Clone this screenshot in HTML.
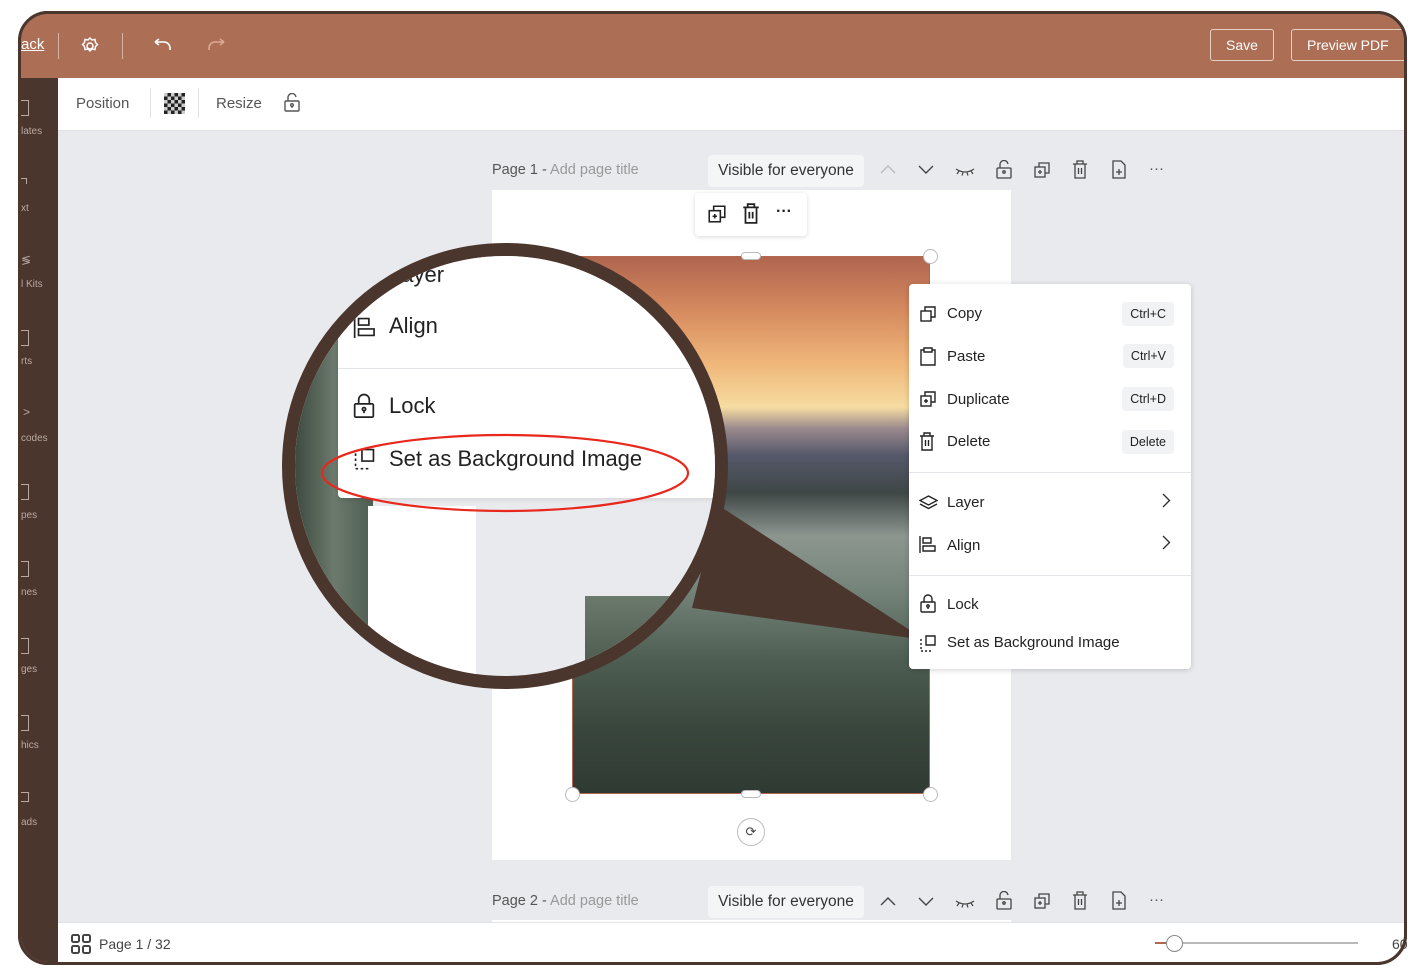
<!DOCTYPE html>
<html><head><meta charset="utf-8"><style>
*{box-sizing:border-box;margin:0;padding:0}
body{width:1425px;height:975px;background:#fff;position:relative;overflow:hidden;font-family:"Liberation Sans",sans-serif}
.frame{position:absolute;left:18px;top:11px;width:1389px;height:954px;border:3px solid #4b362e;border-radius:30px;overflow:hidden;background:#e9eaee}
.top{position:absolute;left:0;top:0;width:100%;height:64px;background:#ad6e56}
.side{position:absolute;left:0;top:64px;width:37px;bottom:0;background:#4b362e}
.tool{position:absolute;left:37px;top:64px;right:0;height:53px;background:#fff;border-bottom:1px solid #dfe0e4}
.abs{position:absolute}
.sl{position:absolute;left:0;width:37px;font-size:10px;color:#b8aaa3}
.btn{position:absolute;border:1px solid #e8cfc4;border-radius:3px;color:#fff;font-size:14px;text-align:center;line-height:30px;height:32px}
.menu{position:absolute;left:909px;top:284px;width:282px;height:385px;background:#fff;border-radius:4px;box-shadow:0 1px 6px rgba(0,0,0,.18);font-size:15px;color:#222}
.mi{position:absolute;left:38px}
.kb{position:absolute;right:17px;background:#f1f2f4;border-radius:4px;font-size:12.5px;padding:0 8px;height:24px;line-height:24px}
.ic{position:absolute;left:10px}
.hdr{position:absolute;font-size:14.5px;color:#555}
</style></head><body>
<div class="frame">
 <div class="top">
  <div class="abs" style="left:0;top:22px;color:#fff;font-size:15px;text-decoration:underline">ack</div>
  <div class="abs" style="left:37px;top:19px;width:1px;height:26px;background:#d9b2a2"></div>
  <svg class="abs" style="left:59px;top:22px" width="20" height="20" viewBox="0 0 20 20" fill="none" stroke="#fff" stroke-width="1.5"><circle cx="10" cy="10" r="3"/><path d="M10 2l2 2 3-.5.5 3 2 2-2 2-.5 3-3-.5-2 2-2-2-3 .5-.5-3-2-2 2-2 .5-3 3 .5z"/></svg>
  <div class="abs" style="left:101px;top:19px;width:1px;height:26px;background:#d9b2a2"></div>
  <svg class="abs" style="left:130px;top:24px" width="22" height="16" viewBox="0 0 22 16" fill="none" stroke="#fff" stroke-width="1.6"><path d="M4 4h9a6 6 0 016 6v2M4 4l4-3M4 4l4 3"/></svg>
  <svg class="abs" style="left:185px;top:24px" width="22" height="16" viewBox="0 0 22 16" fill="none" stroke="#d9a993" stroke-width="1.6"><path d="M3 12v-2a6 6 0 016-6h9M18 4l-4-3M18 4l-4 3"/></svg>
  <div class="btn" style="left:1189px;top:15px;width:64px">Save</div>
  <div class="btn" style="left:1270px;top:15px;width:120px;text-align:left;padding-left:15px">Preview PDF</div>
 </div>
 <div class="side">
  <div class="sl" style="top:48px">lates</div>
  <div class="sl" style="top:125px">xt</div>
  <div class="sl" style="top:201px">l Kits</div>
  <div class="sl" style="top:278px">rts</div>
  <div class="sl" style="top:355px">codes</div>
  <div class="sl" style="top:432px">pes</div>
  <div class="sl" style="top:509px">nes</div>
  <div class="sl" style="top:586px">ges</div>
  <div class="sl" style="top:662px">hics</div>
  <div class="sl" style="top:739px">ads</div>
  <div class="abs" style="left:0;top:22px;width:8px;height:16px;border:1.5px solid #b8aaa3;border-left:none"></div>
  <div class="abs" style="left:0;top:100px;width:6px;height:6px;border-top:1.5px solid #b8aaa3;border-right:1.5px solid #b8aaa3"></div>
  <div class="abs" style="left:0;top:175px;color:#b8aaa3;font-size:12px">≶</div>
  <div class="abs" style="left:0;top:252px;width:8px;height:16px;border:1.5px solid #b8aaa3;border-left:none"></div>
  <div class="abs" style="left:2px;top:327px;color:#b8aaa3;font-size:12px">&gt;</div>
  <div class="abs" style="left:0;top:406px;width:8px;height:16px;border:1.5px solid #b8aaa3;border-left:none"></div>
  <div class="abs" style="left:0;top:483px;width:8px;height:16px;border:1.5px solid #b8aaa3;border-left:none"></div>
  <div class="abs" style="left:0;top:560px;width:8px;height:16px;border:1.5px solid #b8aaa3;border-left:none"></div>
  <div class="abs" style="left:0;top:637px;width:8px;height:16px;border:1.5px solid #b8aaa3;border-left:none"></div>
  <div class="abs" style="left:0;top:714px;width:8px;height:10px;border:1.5px solid #b8aaa3;border-left:none"></div>
 </div>
 <div class="tool">
  <div class="abs" style="left:18px;top:17px;font-size:15px;color:#555">Position</div>
  <div class="abs" style="left:92px;top:10px;width:1px;height:30px;background:#e2e2e2"></div>
  <div class="abs" style="left:106px;top:15px;width:21px;height:21px;background:repeating-conic-gradient(#222 0 25%,#ccc 0 50%) 0 0/7px 7px"></div>
  <div class="abs" style="left:140px;top:10px;width:1px;height:30px;background:#e2e2e2"></div>
  <div class="abs" style="left:158px;top:17px;font-size:15px;color:#555">Resize</div>
  <svg class="abs" style="left:225px;top:15px" width="18" height="20" viewBox="0 0 18 20" fill="none" stroke="#555" stroke-width="1.4"><rect x="2" y="8" width="14" height="10" rx="1"/><path d="M5 8V5a4 4 0 018-1"/><circle cx="9" cy="12" r="1.3"/><path d="M9 13v2"/></svg>
 </div>
</div>
<!-- page 1 header -->
<div class="hdr" style="left:492px;top:162px">Page 1 - <span style="color:#999">Add page title</span></div>
<div class="abs" style="left:708px;top:155px;width:156px;height:32px;background:#f4f5f7;border-radius:4px;font-size:15.5px;color:#333;line-height:32px;text-align:center">Visible for everyone</div>
<svg class="abs" style="left:880px;top:164px" width="16" height="10" viewBox="0 0 16 10" fill="none" stroke="#bbb" stroke-width="1.4"><path d="M1 9l7-7 7 7"/></svg>
<svg class="abs" style="left:918px;top:165px" width="16" height="10" viewBox="0 0 16 10" fill="none" stroke="#444" stroke-width="1.4"><path d="M1 1l7 7 7-7"/></svg>
<svg class="abs" style="left:955px;top:166px" width="20" height="10" viewBox="0 0 20 10" fill="none" stroke="#444" stroke-width="1.2"><path d="M1 3q9 6 18 0M4 5l-2 3M8 6.5l-1 3M12 6.5l1 3M16 5l2 3"/></svg>
<svg class="abs" style="left:995px;top:160px" width="18" height="20" viewBox="0 0 18 20" fill="none" stroke="#444" stroke-width="1.3"><rect x="2" y="8" width="14" height="10" rx="1"/><path d="M5 8V5a4 4 0 018-1"/><circle cx="9" cy="12" r="1.2"/></svg>
<svg class="abs" style="left:1033px;top:161px" width="18" height="18" viewBox="0 0 18 18" fill="none" stroke="#444" stroke-width="1.3"><rect x="2" y="6" width="10" height="10"/><path d="M6 6V2h10v10h-4M7 9v4M5 11h4"/></svg>
<svg class="abs" style="left:1072px;top:160px" width="16" height="19" viewBox="0 0 16 19" fill="none" stroke="#444" stroke-width="1.3"><path d="M1 4h14M5 4V1h6v3M3 4v14h10V4M6.5 8v6M9.5 8v6"/></svg>
<svg class="abs" style="left:1111px;top:160px" width="16" height="19" viewBox="0 0 16 19" fill="none" stroke="#444" stroke-width="1.3"><path d="M2 1h8l4 4v13H2zM8 9v6M5 12h6"/></svg>
<div class="abs" style="left:1149px;top:160px;font-size:15px;color:#555">···</div>
<!-- page -->
<div class="abs" style="left:492px;top:190px;width:519px;height:670px;background:#fff"></div>
<div class="abs" style="left:572px;top:256px;width:358px;height:538px;border:1.5px solid #b2684e;background:linear-gradient(#b0654f 0%,#d68a5f 10%,#f0b77a 20%,#f6dca1 28%,#9a8a8e 32%,#55586a 37%,#3f4746 44%,#8c968f 52%,#75847a 62%,#4e5e52 75%,#39463c 88%,#2f3a33 100%)"></div>
<div class="abs" style="left:741px;top:252px;width:20px;height:8px;background:#fff;border:1px solid #bbb;border-radius:4px"></div>
<div class="abs" style="left:741px;top:790px;width:20px;height:8px;background:#fff;border:1px solid #bbb;border-radius:4px"></div>
<div class="abs" style="left:923px;top:249px;width:15px;height:15px;background:#fff;border:1px solid #bbb;border-radius:50%"></div>
<div class="abs" style="left:565px;top:787px;width:15px;height:15px;background:#fff;border:1px solid #bbb;border-radius:50%"></div>
<div class="abs" style="left:923px;top:787px;width:15px;height:15px;background:#fff;border:1px solid #bbb;border-radius:50%"></div>
<div class="abs" style="left:737px;top:818px;width:28px;height:28px;background:#fff;border:1px solid #bbb;border-radius:50%;font-size:13px;text-align:center;line-height:26px;color:#444">⟳</div>
<!-- floating toolbar -->
<div class="abs" style="left:695px;top:193px;width:112px;height:43px;background:#fff;border-radius:4px;box-shadow:0 1px 5px rgba(0,0,0,.15)"></div>
<svg class="abs" style="left:707px;top:204px" width="20" height="20" viewBox="0 0 18 18" fill="none" stroke="#222" stroke-width="1.4"><rect x="2" y="6" width="10" height="10"/><path d="M6 6V2h10v10h-4M7 9v4M5 11h4"/></svg>
<svg class="abs" style="left:742px;top:203px" width="18" height="21" viewBox="0 0 16 19" fill="none" stroke="#222" stroke-width="1.6"><path d="M1 4h14M5 4V1h6v3M3 4v14h10V4M6.5 8v6M9.5 8v6"/></svg>
<div class="abs" style="left:776px;top:203px;font-size:16px;font-weight:bold;color:#222">···</div>
<!-- wedge -->
<svg class="abs" style="left:0;top:0" width="1425" height="975"><polygon points="718,505 692,608 925,640" fill="#4b362e"/></svg>
<!-- context menu -->
<div class="menu">
 <svg class="ic" style="top:21px" width="18" height="18" viewBox="0 0 18 18" fill="none" stroke="#222" stroke-width="1.4"><rect x="2" y="6" width="10" height="10"/><path d="M6 6V2h10v10h-4"/></svg>
 <div class="mi" style="top:21px">Copy</div><div class="kb" style="top:18px">Ctrl+C</div>
 <svg class="ic" style="top:63px" width="18" height="19" viewBox="0 0 18 19" fill="none" stroke="#222" stroke-width="1.4"><path d="M5 3H2v15h14V3h-3M5 1h8v4H5z"/></svg>
 <div class="mi" style="top:64px">Paste</div><div class="kb" style="top:60px">Ctrl+V</div>
 <svg class="ic" style="top:106px" width="18" height="18" viewBox="0 0 18 18" fill="none" stroke="#222" stroke-width="1.4"><rect x="2" y="6" width="10" height="10"/><path d="M6 6V2h10v10h-4M7 9v4M5 11h4"/></svg>
 <div class="mi" style="top:107px">Duplicate</div><div class="kb" style="top:103px">Ctrl+D</div>
 <svg class="ic" style="top:148px" width="16" height="19" viewBox="0 0 16 19" fill="none" stroke="#222" stroke-width="1.4"><path d="M1 4h14M5 4V1h6v3M3 4v14h10V4M6.5 8v6M9.5 8v6"/></svg>
 <div class="mi" style="top:149px">Delete</div><div class="kb" style="top:146px">Delete</div>
 <div class="abs" style="left:0;top:188px;width:100%;height:1px;background:#e4e5e8"></div>
 <svg class="ic" style="top:211px" width="19" height="15" viewBox="0 0 19 15" fill="none" stroke="#222" stroke-width="1.4"><path d="M9.5 1L18 5.5 9.5 10 1 5.5zM1 9l8.5 4.5L18 9"/></svg>
 <div class="mi" style="top:210px">Layer</div>
 <svg class="abs" style="right:20px;top:209px" width="9" height="15" viewBox="0 0 9 15" fill="none" stroke="#333" stroke-width="1.4"><path d="M1 1l6.5 6.5L1 14"/></svg>
 <svg class="ic" style="top:252px" width="18" height="17" viewBox="0 0 18 17" fill="none" stroke="#222" stroke-width="1.4"><path d="M1 0v17M4 2h8v5H4zM4 10h12v5H4z"/></svg>
 <div class="mi" style="top:253px">Align</div>
 <svg class="abs" style="right:20px;top:251px" width="9" height="15" viewBox="0 0 9 15" fill="none" stroke="#333" stroke-width="1.4"><path d="M1 1l6.5 6.5L1 14"/></svg>
 <div class="abs" style="left:0;top:291px;width:100%;height:1px;background:#e4e5e8"></div>
 <svg class="ic" style="top:310px" width="18" height="20" viewBox="0 0 18 20" fill="none" stroke="#222" stroke-width="1.4"><rect x="2" y="8" width="14" height="10" rx="1"/><path d="M5 8V5a4 4 0 018 0v3"/><circle cx="9" cy="12" r="1.2"/><path d="M9 13v2"/></svg>
 <div class="mi" style="top:312px">Lock</div>
 <svg class="ic" style="top:350px" width="18" height="18" viewBox="0 0 18 18" fill="none" stroke="#222" stroke-width="1.4" stroke-dasharray="2 2"><path d="M2 5v12h12"/><path d="M7 2h9v9h-9z" stroke-dasharray="none"/></svg>
 <div class="mi" style="top:350px">Set as Background Image</div>
</div>
<!-- magnifier -->
<div class="abs" style="left:282px;top:243px;width:446px;height:446px;border-radius:50%;border:13px solid #4b362e;overflow:hidden;background:#e9eaee">
 <div class="abs" style="left:0;top:0;width:78px;height:420px;background:linear-gradient(90deg,#3d4a40,#6b7a6c 50%,#4e5e52)"></div>
 <div class="abs" style="left:73px;top:250px;width:108px;height:200px;background:#fff"></div>
 <div class="abs" style="left:290px;top:340px;width:150px;height:110px;background:linear-gradient(#6b7a6c,#3d4a40)"></div>
 <div class="abs" style="left:43px;top:0;width:400px;height:242px;background:#fff;border-radius:0 0 4px 4px;box-shadow:0 2px 4px rgba(0,0,0,.08)"></div>
 <div class="abs" style="left:43px;top:112px;width:400px;height:1px;background:#e2e3e6"></div>
 <div class="abs" style="left:94px;top:6px;font-size:22px;color:#222">Layer</div>
 <svg class="abs" style="left:58px;top:60px" width="24" height="22" viewBox="0 0 18 17" fill="none" stroke="#222" stroke-width="1.3"><path d="M1 0v17M4 2h8v5H4zM4 10h12v5H4z"/></svg>
 <div class="abs" style="left:94px;top:57px;font-size:22px;color:#222">Align</div>
 <svg class="abs" style="left:57px;top:137px" width="24" height="27" viewBox="0 0 18 20" fill="none" stroke="#222" stroke-width="1.3"><rect x="2" y="8" width="14" height="10" rx="1"/><path d="M5 8V5a4 4 0 018 0v3"/><circle cx="9" cy="12" r="1.2"/><path d="M9 13v2"/></svg>
 <div class="abs" style="left:94px;top:137px;font-size:22px;color:#222">Lock</div>
 <svg class="abs" style="left:58px;top:191px" width="23" height="23" viewBox="0 0 18 18" fill="none" stroke="#222" stroke-width="1.3" stroke-dasharray="2 2"><path d="M2 5v12h12"/><path d="M7 2h9v9h-9z" stroke-dasharray="none"/></svg>
 <div class="abs" style="left:94px;top:190px;font-size:22px;color:#222">Set as Background Image</div>
 <svg class="abs" style="left:25px;top:170px" width="380" height="90"><ellipse cx="185" cy="47" rx="183" ry="38" fill="none" stroke="#e8281c" stroke-width="2.2"/></svg>
</div>
<!-- page 2 header -->
<div class="hdr" style="left:492px;top:893px">Page 2 - <span style="color:#999">Add page title</span></div>
<div class="abs" style="left:708px;top:886px;width:156px;height:32px;background:#f4f5f7;border-radius:4px;font-size:15.5px;color:#333;line-height:32px;text-align:center">Visible for everyone</div>
<svg class="abs" style="left:880px;top:896px" width="16" height="10" viewBox="0 0 16 10" fill="none" stroke="#444" stroke-width="1.4"><path d="M1 9l7-7 7 7"/></svg>
<svg class="abs" style="left:918px;top:897px" width="16" height="10" viewBox="0 0 16 10" fill="none" stroke="#444" stroke-width="1.4"><path d="M1 1l7 7 7-7"/></svg>
<svg class="abs" style="left:955px;top:898px" width="20" height="10" viewBox="0 0 20 10" fill="none" stroke="#444" stroke-width="1.2"><path d="M1 3q9 6 18 0M4 5l-2 3M8 6.5l-1 3M12 6.5l1 3M16 5l2 3"/></svg>
<svg class="abs" style="left:995px;top:891px" width="18" height="20" viewBox="0 0 18 20" fill="none" stroke="#444" stroke-width="1.3"><rect x="2" y="8" width="14" height="10" rx="1"/><path d="M5 8V5a4 4 0 018-1"/><circle cx="9" cy="12" r="1.2"/></svg>
<svg class="abs" style="left:1033px;top:892px" width="18" height="18" viewBox="0 0 18 18" fill="none" stroke="#444" stroke-width="1.3"><rect x="2" y="6" width="10" height="10"/><path d="M6 6V2h10v10h-4M7 9v4M5 11h4"/></svg>
<svg class="abs" style="left:1072px;top:891px" width="16" height="19" viewBox="0 0 16 19" fill="none" stroke="#444" stroke-width="1.3"><path d="M1 4h14M5 4V1h6v3M3 4v14h10V4M6.5 8v6M9.5 8v6"/></svg>
<svg class="abs" style="left:1111px;top:891px" width="16" height="19" viewBox="0 0 16 19" fill="none" stroke="#444" stroke-width="1.3"><path d="M2 1h8l4 4v13H2zM8 9v6M5 12h6"/></svg>
<div class="abs" style="left:1149px;top:891px;font-size:15px;color:#555">···</div>
<div class="abs" style="left:492px;top:920px;width:519px;height:2px;background:#fff"></div>
<!-- bottom bar -->
<div class="abs" style="left:58px;top:922px;width:1346px;height:40px;background:#fff;border-radius:0 0 28px 0;border-top:1px solid #e2e3e6"></div>
<svg class="abs" style="left:71px;top:934px" width="20" height="20" viewBox="0 0 20 20" fill="none" stroke="#444" stroke-width="2"><rect x="1" y="1" width="7" height="7" rx="1.5"/><rect x="12" y="1" width="7" height="7" rx="1.5"/><rect x="1" y="12" width="7" height="7" rx="1.5"/><rect x="12" y="12" width="7" height="7" rx="1.5"/></svg>
<div class="abs" style="left:99px;top:936px;font-size:14px;color:#444">Page 1 / 32</div>
<div class="abs" style="left:1155px;top:942px;width:203px;height:2px;background:#bbb"></div>
<div class="abs" style="left:1155px;top:942px;width:14px;height:2px;background:#b2684e"></div>
<div class="abs" style="left:1166px;top:935px;width:17px;height:17px;border-radius:50%;background:#fff;border:1.2px solid #888"></div>
<div class="abs" style="left:1392px;top:936px;font-size:14px;color:#444">60</div>
<div class="abs" style="left:18px;top:11px;width:1389px;height:954px;border:3px solid #4b362e;border-radius:30px;pointer-events:none"></div>
</body></html>
